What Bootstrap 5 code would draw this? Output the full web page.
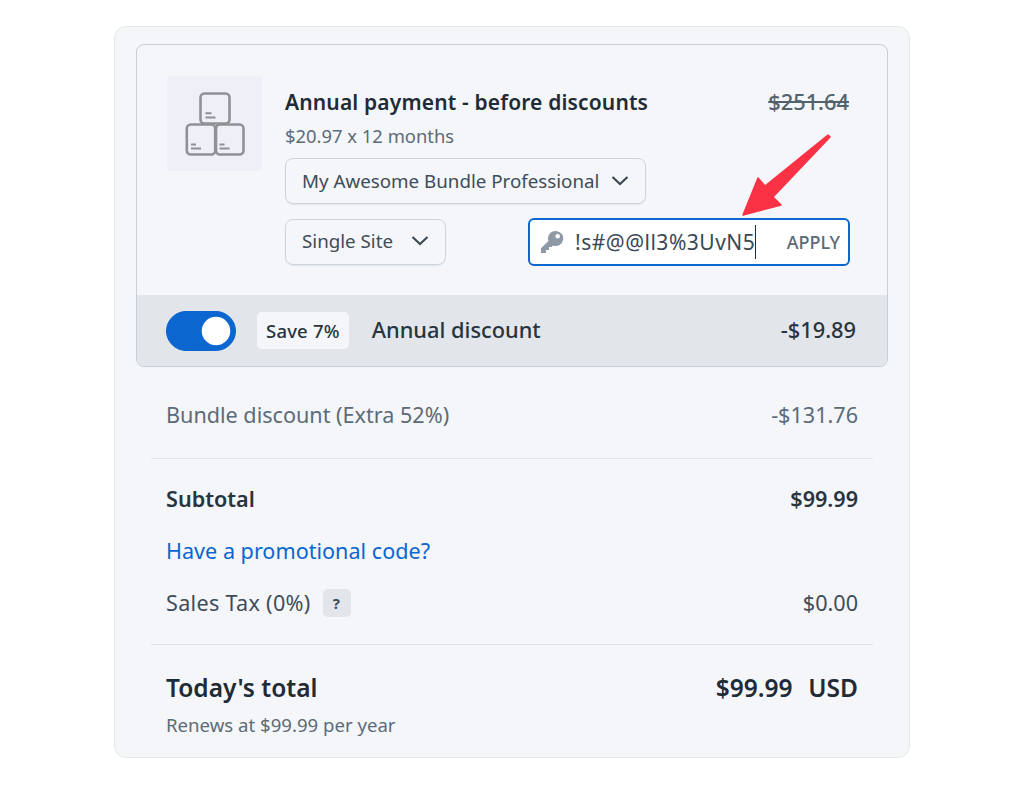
<!DOCTYPE html>
<html lang="en">
<head>
    <meta charset="UTF-8">
    <meta name="viewport" content="width=device-width, initial-scale=1.0">
    <title>Order summary</title>
    <link href="https://cdn.jsdelivr.net/npm/bootstrap@5.3.3/dist/css/bootstrap.min.css" rel="stylesheet">
    <style>
        body {
            background-color: #fff;
            font-family: "Noto Sans", sans-serif;
            color: #28343e;
        }
        .summary-box {
            width: 796px;
            height: 732px;
            margin: 26px auto 0;
            padding: 17px 21px 0;
            background-color: #f4f6fa;
            border: 1px solid #e2e8ee;
            border-radius: 12px;
        }
        .plan-box {
            height: 323px;
            border: 1px solid #c6ced6;
            border-radius: 8px;
            overflow: hidden;
        }
        .plan-top {
            height: 250px;
            padding: 31px 38px 0 30px;
            gap: 23px;
        }
        .plan-thumb {
            width: 95px;
            height: 95px;
            flex: none;
            background-color: #eff0f7;
            border-radius: 4px;
        }
        .title-line {
            margin-top: 11px;
        }
        .plan-title {
            font-size: 21px;
            line-height: 30px;
            font-weight: 600;
            color: #1f2b35;
            letter-spacing: .15px;
        }
        .plan-old-price {
            font-size: 21.8px;
            line-height: 30px;
            font-weight: 500;
            color: #53626f;
        }
        .plan-sub {
            font-size: 18.4px;
            line-height: 26px;
            color: #5c6b78;
            margin-top: 6px;
        }
        .pick-btn {
            height: 46px;
            padding: 0 16px;
            font-size: 18.75px;
            white-space: nowrap;
            color: #3f4c58;
            background-color: transparent;
            border: 1px solid #ccd3da;
            border-radius: 8px;
            box-shadow: 0 1px 1px rgba(40, 52, 62, .08);
        }
        .pick-first {
            width: 361px;
            margin-top: 9px;
        }
        .pick-second {
            width: 161px;
            padding-bottom: 2px;
        }
        .second-line {
            margin-top: 14px;
            margin-right: -1px;
        }
        .code-wrap {
            position: relative;
            width: 322px;
            height: 48px;
            padding: 0 8px 0 10px;
            background-color: #fff;
            border: 2.5px solid #0b66d0;
            border-radius: 6px;
        }
        .code-text {
            margin-left: 11px;
            font-size: 21px;
            letter-spacing: .5px;
            color: #3a4955;
            border-right: 1.5px solid #1f2b35;
            line-height: 34px;
        }
        .code-apply {
            font-size: 18px;
            font-weight: 500;
            color: #5c6b78;
        }
        .red-arrow {
            position: absolute;
            left: 210px;
            top: -87px;
            width: 100px;
            height: 90px;
        }
        .plan-band {
            height: 71px;
            padding: 0 31px 0 29px;
            background-color: #e2e5e9;
        }
        .form-switch .toggle-big {
            width: 70px;
            height: 40px;
            margin: 0;
            float: none;
            background-color: #0b66d0;
            border-color: #0b66d0;
        }
        .save-tag {
            margin-left: 21px;
            margin-right: 23px;
            padding: 0 9px;
            height: 37px;
            line-height: 37px;
            font-size: 18.5px;
            font-weight: 500;
            letter-spacing: .2px;
            background-color: #f4f6fa;
            border-radius: 5px;
            color: #28343e;
        }
        .band-label, .band-amount {
            font-size: 21.8px;
            font-weight: 500;
            color: #28343e;
        }
        .sum-rows {
            padding: 0 15px;
        }
        .sum-row {
            padding: 0 15px;
            font-size: 21.6px;
            line-height: 32px;
            color: #3f4c58;
        }
        .row-muted {
            padding-top: 32px;
            padding-bottom: 27px;
            color: #5c6b78;
        }
        .row-strong {
            padding-top: 24px;
            font-weight: 600;
            color: #28343e;
        }
        .row-promo {
            padding-top: 20px;
        }
        .row-tax {
            padding-top: 20px;
            padding-bottom: 25px;
        }
        .tax-label {
            letter-spacing: .3px;
        }
        .sum-line {
            margin: 0;
            border-color: #dfe3e8;
            opacity: 1;
        }
        .promo-link {
            color: #0b66d0;
            text-decoration: none;
        }
        .help-tag {
            width: 28px;
            height: 28px;
            margin-left: 12px;
            font-size: 15px;
            font-weight: 700;
            background-color: #e2e5e9;
            border-radius: 5px;
        }
        .row-total {
            padding-top: 25px;
            line-height: 36px;
        }
        .total-label {
            font-size: 24.5px;
            font-weight: 600;
            color: #1f2b35;
        }
        .total-amount {
            word-spacing: 1.5px;
        }
        .total-note {
            margin-top: 6px;
            font-size: 18.6px;
            line-height: 26px;
            color: #5c6b78;
        }
    </style>
</head>
<body>

    <div class="summary-box">
        <!-- Plan box -->
        <div class="plan-box">
            <div class="plan-top d-flex">
                <div class="plan-thumb d-flex align-items-center justify-content-center">
                    <svg width="64" height="64" viewBox="0 0 64 64" fill="none" stroke="#909095" stroke-width="2.6" stroke-linejoin="round">
                        <rect x="17.5" y="1.5" width="29" height="30" rx="4"/>
                        <rect x="3.8" y="32.5" width="28.4" height="30" rx="4"/>
                        <rect x="33" y="32.5" width="27.5" height="30" rx="4"/>
                        <path d="M22.5 21.2h6M22.5 25.5h10M8 52.5h5M8 56.5h10M36.5 52.5h5M36.5 56.5h10" stroke-width="2"/>
                    </svg>
                </div>
                <div class="flex-grow-1">
                    <div class="title-line d-flex justify-content-between align-items-start">
                        <div class="plan-title">Annual payment - before discounts</div>
                        <div class="plan-old-price"><s>$251.64</s></div>
                    </div>
                    <div class="plan-sub">$20.97 x 12 months</div>
                    <div class="pick-btn pick-first d-flex align-items-center justify-content-between">
                        <span>My Awesome Bundle Professional</span>
                        <svg width="18" height="12" viewBox="0 0 18 12" fill="none" stroke="#3f4c58" stroke-width="2.2"><path d="M1.5 2l7.5 7 7.500-7"/></svg>
                    </div>
                    <div class="second-line d-flex justify-content-between align-items-center">
                        <div class="pick-btn pick-second d-flex align-items-center justify-content-between">
                            <span>Single Site</span>
                            <svg width="18" height="12" viewBox="0 0 18 12" fill="none" stroke="#3f4c58" stroke-width="2.2"><path d="M1.5 2l7.5 7 7.500-7"/></svg>
                        </div>
                        <div class="code-wrap d-flex align-items-center">
                            <svg width="24" height="24" viewBox="0 0 24 24" fill="#8e99a5"><path d="M15.5 1a7.500 7.500 0 0 0-7.100 9.900L1 18.300V23h5v-3h3v-3h2.600l1.500-1.500a7.500 7.500 0 1 0 2.400-14.500zm2.200 7.600a2.300 2.300 0 1 1 0-4.600 2.300 2.300 0 0 1 0 4.600z"/></svg>
                            <span class="code-text">!s#@@ll3%3UvN5</span>
                            <span class="code-apply ms-auto">APPLY</span>
                            <svg class="red-arrow" viewBox="0 0 100 90"><path d="M3 82 18 45 25 53 88 2 90 4 33 64 41 72z" fill="#fb3246" stroke="#fb3246" stroke-width="1.500" stroke-linejoin="round"/></svg>
                        </div>
                    </div>
                </div>
            </div>
            <div class="plan-band d-flex align-items-center">
                <div class="form-check form-switch p-0 m-0 d-flex">
                    <input class="form-check-input toggle-big" type="checkbox" checked>
                </div>
                <span class="save-tag">Save 7%</span>
                <span class="band-label">Annual discount</span>
                <span class="band-amount ms-auto">-$19.89</span>
            </div>
        </div>

        <!-- Totals -->
        <div class="sum-rows">
            <div class="sum-row row-muted d-flex justify-content-between">
                <span>Bundle discount (Extra 52%)</span><span>-$131.76</span>
            </div>
            <hr class="sum-line">
            <div class="sum-row row-strong d-flex justify-content-between">
                <span>Subtotal</span><span>$99.99</span>
            </div>
            <div class="sum-row row-promo">
                <a href="#" class="promo-link">Have a promotional code?</a>
            </div>
            <div class="sum-row row-tax d-flex justify-content-between">
                <span class="tax-label d-flex align-items-center">Sales Tax (0%)<span class="help-tag d-inline-flex align-items-center justify-content-center">?</span></span><span>$0.00</span>
            </div>
            <hr class="sum-line">
            <div class="sum-row row-total d-flex justify-content-between">
                <span class="total-label">Today's total</span><span class="total-label total-amount">$99.99 &nbsp;USD</span>
            </div>
            <div class="sum-row total-note">Renews at $99.99 per year</div>
        </div>
    </div>

</body>
</html>
